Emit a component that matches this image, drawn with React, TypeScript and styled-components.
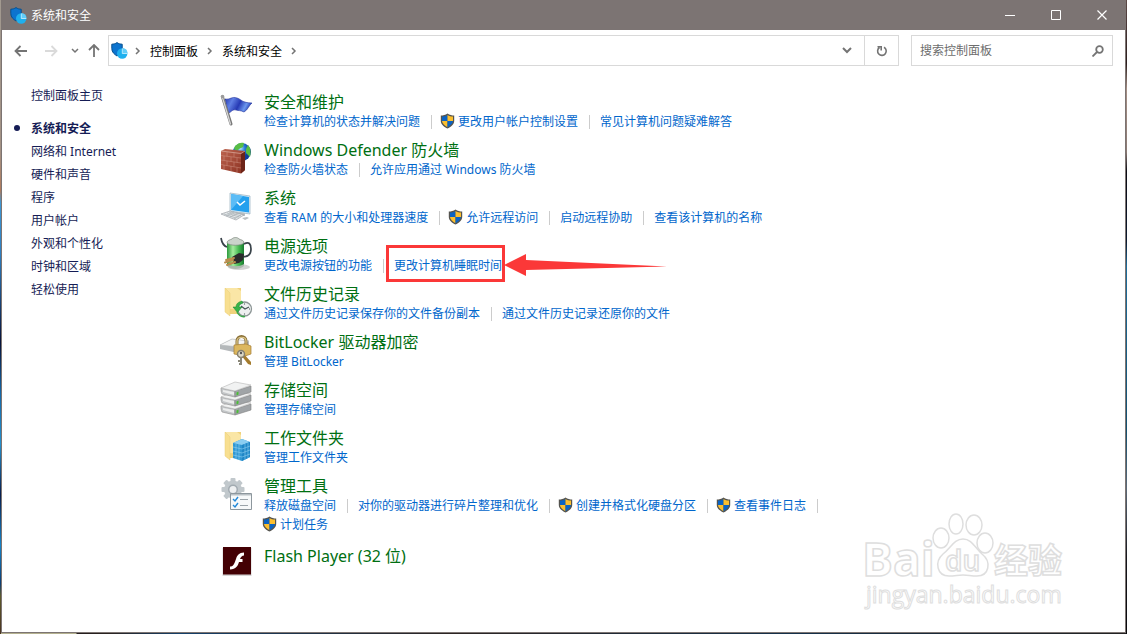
import React from 'react';
import styled, { createGlobalStyle } from 'styled-components';

const GlobalStyle = createGlobalStyle`
  *, *::before, *::after { box-sizing: border-box; }
  body {
    margin: 0;
    font-family: 'Noto Sans', 'Noto Sans CJK SC', sans-serif;
    font-size: 12px;
    color: #000;
  }
  ul { list-style: none; margin: 0; padding: 0; }
`;

const Desktop = styled.div`
  display: flex;
  min-height: 100vh;
  padding: 0 1px 1px;
  background:
    linear-gradient(#5d4a48 0, #2b1d1d 10%, #a58f85 14%, #8b7a74 24%, #0b0b14 27%, #0c1a30 38%, #1d6d9c 42%, #14506f 68%, #5c6a78 77%, #15161c 88%, #08080c) right / 1px 100% no-repeat,
    linear-gradient(#a29a90 0, #a39184 24%, #b07b5c 30%, #3f97d3 32%, #2f7fc0 40%, #071238 54%, #1568a8 62%, #2690cc 70%, #071d4c 78%, #1784c8 86%, #0b3d73 92%, #5e5a2c 94%, #4a3320) left / 1px 100% no-repeat,
    linear-gradient(90deg, #b3b08e 0, #b3b08e 76px, #221c1c 77px, #2a2320 110px, #14406a 180px, #2c2422 40%, #14304a 70%, #222) bottom / 100% 1px no-repeat;
`;

const Window = styled.div`
  position: relative;
  display: flex;
  flex-direction: column;
  flex: 1;
  min-width: 0;
  background: #fff;
  border: 1px solid #7c7472;
  border-top: 0;
`;

const TitleBar = styled.header`
  display: flex;
  align-items: center;
  height: 30px;
  padding-left: 8px;
  gap: 4px;
  background: #7c7473;
  color: #fff;
`;

const WindowTitle = styled.h1`
  flex: 1;
  margin: 0;
  font-size: 12px;
  font-weight: 400;
`;

const CaptionButtons = styled.div`
  display: flex;
`;

const CaptionButton = styled.button`
  display: grid;
  place-items: center;
  width: 46px;
  height: 28px;
  padding: 0;
  border: 0;
  background: none;
  color: #fff;
`;

const Toolbar = styled.div`
  display: flex;
  align-items: center;
  padding: 5px 12px 0 7px;
`;

const NavButton = styled.button<{ $width: number; $color?: string }>`
  display: grid;
  place-items: center;
  width: ${(p) => p.$width}px;
  height: 30px;
  padding: 0;
  border: 0;
  background: none;
  color: ${(p) => p.$color ?? '#747474'};
`;

const AddressBar = styled.div`
  display: flex;
  align-items: center;
  flex: 1;
  height: 31px;
  margin-left: 1px;
  padding-left: 2px;
  border: 1px solid #d9d9d9;
`;

const Crumbs = styled.nav`
  display: flex;
  align-items: center;
  flex: 1;
  padding-left: 7px;
  color: #747474;
`;

const Crumb = styled.a`
  padding: 0 9px;
  color: #000;
  text-decoration: none;
`;

const Refresh = styled(NavButton)`
  height: 29px;
  border-left: 1px solid #d9d9d9;
`;

const SearchBox = styled.label`
  display: flex;
  align-items: center;
  flex: 0 0 202px;
  min-width: 0;
  height: 31px;
  margin-left: 12px;
  padding: 0 8px;
  border: 1px solid #d9d9d9;
  color: #747474;
`;

const SearchInput = styled.input`
  flex: 1;
  width: 100%;
  min-width: 0;
  padding: 0;
  border: 0;
  outline: 0;
  background: none;
  font: inherit;
  color: #000;
  &::placeholder { color: #6d6d6d; opacity: 1; }
`;

const Body = styled.div`
  display: flex;
  padding-top: 18px;
`;

const Sidebar = styled.nav`
  flex: 0 0 217px;
  padding: 0 0 0 29px;
  line-height: 23px;
`;

const SideLink = styled.a<{ $current?: boolean }>`
  position: relative;
  display: block;
  width: max-content;
  color: #151c55;
  text-decoration: none;
  font-weight: ${(p) => (p.$current ? 700 : 400)};
  &::before {
    content: '';
    display: ${(p) => (p.$current ? 'block' : 'none')};
    position: absolute;
    left: -17px;
    top: 8px;
    width: 6px;
    height: 6px;
    border-radius: 50%;
    background: #151c55;
  }
`;

const SideGroup = styled.div`
  margin-top: 10px;
`;

const Categories = styled.main`
  flex: 1;
  padding-top: 8px;
`;

const Category = styled.section<{ $tall?: boolean }>`
  display: flex;
  align-items: flex-start;
  gap: 9px;
  padding-bottom: ${(p) => (p.$tall ? 12 : 9)}px;
`;

const IconBox = styled.div`
  flex: 0 0 36px;
  height: 36px;
  svg { display: block; overflow: visible; }
`;

const CategoryTitle = styled.h2`
  margin: 0;
  font-size: 16px;
  font-weight: 400;
  line-height: 20px;
`;

const TitleLink = styled.a`
  color: #006f12;
  text-decoration: none;
`;

const Tasks = styled.ul`
  display: flex;
  flex-wrap: wrap;
  max-width: 600px;
  line-height: 19px;
`;

const Task = styled.li<{ $divided: boolean }>`
  position: relative;
  display: flex;
  align-items: center;
  &::after {
    content: '';
    display: ${(p) => (p.$divided ? 'block' : 'none')};
    width: 1px;
    height: 14px;
    margin: 0 10px 0 11px;
    background: #ccc;
  }
`;

const TaskLink = styled.a`
  display: flex;
  align-items: center;
  gap: 3px;
  color: #0066cc;
  text-decoration: none;
  white-space: nowrap;
  svg { margin: 0 0 2px -2px; }
`;

const Callout = styled.div`
  position: absolute;
  left: -8px;
  top: -11px;
  width: 119px;
  height: 37px;
  border: 3px solid #fb3838;
  pointer-events: none;
  svg {
    position: absolute;
    left: 114px;
    top: 4px;
  }
`;

const Watermark = styled.div`
  position: absolute;
  right: 54px;
  bottom: 20px;
  pointer-events: none;
  svg { display: block; overflow: visible; }
`;

const UacShield = () => (
  <svg width="15" height="16" viewBox="0 0 15 16" aria-hidden="true">
    <path d="M7.500 .5C5.500 2 3 2.500 .8 2.500V8c0 3.500 3.500 6 6.700 7.500C10.700 14 14.200 11.500 14.200 8V2.500C12 2.500 9.500 2 7.500 .5Z" fill="#55544f" />
    <path d="M7.500 2C6 3 4 3.500 2 3.600V8h5.500Z" fill="#0a63c4" />
    <path d="M7.500 2C9 3 11 3.500 13 3.600V8H7.500Z" fill="#fcbf2e" />
    <path d="M2 8c.2 2.600 2.800 4.800 5.500 6.200V8Z" fill="#fcbf2e" />
    <path d="M13 8c-.2 2.600-2.800 4.800-5.500 6.200V8Z" fill="#0a63c4" />
  </svg>
);

const SecurityIcon = () => (
  <svg width="17" height="17" viewBox="0 0 17 17" aria-hidden="true">
    <path d="M6 .6C4.500 1.700 2.500 2.200 .8 2.200v4.300c0 3.600 2.500 5.800 5.200 7.500 2.700-1.700 5.200-3.900 5.200-7.500V2.200C9.500 2.200 7.500 1.700 6 .6Z" fill="#0c74cf" stroke="#08518f" />
    <circle cx="11.200" cy="11.500" r="5.200" fill="#1fb0ee" />
    <path d="M11.500 11.200V6a5.200 5.200 0 0 1 5 5.200Z" fill="#62cdf8" />
    <path d="M11.300 6.500v5h5" fill="none" stroke="#d5f3ff" strokeWidth=".8" />
  </svg>
);

const FlagIcon = () => (
  <svg width="36" height="36" viewBox="0 0 36 36">
    <defs>
      <linearGradient id="flag" x1="0" x2="1" y2=".3">
        <stop offset="0" stopColor="#2637ae" /><stop offset=".3" stopColor="#6080e4" />
        <stop offset=".6" stopColor="#2639b4" /><stop offset=".85" stopColor="#6c98ee" /><stop offset="1" stopColor="#304bbd" />
      </linearGradient>
    </defs>
    <path d="M6 7c5 1 7-3 12-1 4 1 5 5 15 5-3 2-4 7-8 9-4-2-5-1-8-2-4-1-5 3-8 3Z" fill="url(#flag)" stroke="#22329c" strokeWidth=".6" />
    <path d="M3.500 5 12 32" stroke="#777" strokeWidth="3" strokeLinecap="round" />
    <path d="M3.300 5 11.500 32" stroke="#d5d5d5" strokeWidth="1.300" strokeLinecap="round" />
    <circle cx="3.500" cy="4.500" r="1.800" fill="#9b9b9b" />
  </svg>
);

const FirewallIcon = () => (
  <svg width="36" height="36" viewBox="0 0 36 36">
    <defs>
      <radialGradient id="globe" cx=".4" cy=".3"><stop offset="0" stopColor="#b9e8ff" /><stop offset=".5" stopColor="#2980da" /><stop offset="1" stopColor="#103d99" /></radialGradient>
      <linearGradient id="brick" x2="1" y2="1"><stop offset="0" stopColor="#bd6450" /><stop offset="1" stopColor="#8a3020" /></linearGradient>
    </defs>
    <circle cx="23" cy="12" r="9" fill="url(#globe)" />
    <path d="M16 6c3-3 6-4 9-3l-1 4-4 2-2 2-3-2Zm11 3 2-4c3 3 3 8 2 12l-4-4Z" fill="#58bd45" />
    <path d="M2 11 6 9l20 2v19l-4 3.500L2 29Z" fill="url(#brick)" />
    <path d="M22 13.500 26 11v19l-4 3.500Z" fill="#6d2418" />
    <path d="M2 11l20 2.500 4-2.500" fill="none" stroke="#ddb0a2" strokeWidth=".7" />
    <path d="M2 15.500l20 2.500M2 20l20 3M2 24.500l20 3.500M8 12v4.500M15 12.500v4.500M5 16v4.500M12 17v4.500M18 18v4.500M8 21v4.500M15 22v4.500M5 25v5M12 26v5M18 27.500v5" fill="none" stroke="#d8a090" strokeWidth=".6" opacity=".7" />
  </svg>
);

const SystemIcon = () => (
  <svg width="36" height="36" viewBox="0 0 36 36">
    <path d="m11 5 20 3v18l-20-3Z" fill="#dceef8" stroke="#96afbf" strokeWidth=".7" />
    <path d="m12 6 18 3v15.500L12 22Z" fill="#24a0ee" />
    <path d="M12 22V6l12 2Z" fill="#5bbcf6" />
    <path d="m18 14 3 3 5-4" fill="none" stroke="#fff" strokeWidth="1.500" />
    <path d="m17 24 9 1v3l-9-1Z" fill="#b8bfc3" />
    <path d="m2 26 9-3 14 4-8 5Z" fill="#e3e6e8" stroke="#9da4a8" strokeWidth=".7" />
    <path d="m5 26 12 4M8 25l12 4M10 24l12 4M7 28l8-4M11 29l8-4M15 31l7-4" stroke="#a8b0b5" strokeWidth=".7" />
    <path d="m23 30 5-1 2 1-4 2Z" fill="#b9bec1" />
  </svg>
);

const PowerIcon = () => (
  <svg width="36" height="36" viewBox="0 0 36 36">
    <defs><linearGradient id="cell"><stop offset="0" stopColor="#2b9a3c" /><stop offset=".35" stopColor="#a4ec9d" /><stop offset=".7" stopColor="#43b850" /><stop offset="1" stopColor="#187a2f" /></linearGradient></defs>
    <ellipse cx="20" cy="31" rx="11" ry="3" fill="#d2d2d2" />
    <path d="M8 7v22c3 4 14 4 17 0V7Z" fill="url(#cell)" />
    <path d="M8 7c0-3 3-3 5-4 1-2 6-2 7 0 2 1 5 1 5 4-3 3-14 3-17 0Z" fill="#cbd3cb" stroke="#7c867c" strokeWidth=".7" />
    <path d="M8 28c5 3 12 3 17 0v2c-4 4-13 4-17 0Z" fill="#aeb8ae" />
    <path d="M2 2c1 6 3 8 6 9M25 8c5-3 7 0 7 5s-3 8-9 8" fill="none" stroke="#384249" strokeWidth="1.700" />
    <path d="m13 21 7-4 5 1-1 6-4 3-5 1Z" fill="#2b2c2d" />
    <path d="m15 22-8 2m9 2-8 3m6-5-8 2.500" stroke="#b98d4e" strokeWidth="2" strokeLinecap="round" />
  </svg>
);

const Folder = () => (
  <>
    <path d="M6 4h16v26H8Z" fill="#f0d27c" />
    <path d="M6 4h12l4 3v19l-11-1Z" fill="#fae6a6" />
    <path d="m6 4 5 5v23l-5-4Z" fill="#f8df90" stroke="#e9cc7a" strokeWidth=".5" />
  </>
);

const HistoryIcon = () => (
  <svg width="36" height="36" viewBox="0 0 36 36">
    <Folder />
    <circle cx="25.500" cy="25" r="7" fill="#eef0f0" stroke="#8d9696" strokeWidth="1.300" />
    <path d="M22 22l4 3 4-2M25.500 19.500v1M31 25h-1M25.500 30.500v-1" fill="none" stroke="#465156" strokeWidth="1.100" />
    <path d="M23 17c-4 1-6 3-6 6h-3l4.500 5.500L23 23h-3c0-2 1-3 4-4Z" fill="#38b44a" stroke="#16802b" strokeWidth=".5" />
    <path d="M18 28c2 4 5 5 8 4.500" fill="none" stroke="#3aa74a" strokeWidth="1.500" />
  </svg>
);

const BitLockerIcon = () => (
  <svg width="36" height="36" viewBox="0 0 36 36">
    <path d="m1 13 12-6 17 2v8l-11 4-18-4Z" fill="#b4b8ba" />
    <path d="m1 13 12-6 17 2-10 6Z" fill="#f3f4f4" stroke="#b4b7b9" strokeWidth=".6" />
    <path d="M18 14V9c0-6 9-6 9 0v5" fill="none" stroke="#8b7138" strokeWidth="3" />
    <path d="M18 14V9c0-5 9-5 9 0v5" fill="none" stroke="#e0cb8e" strokeWidth="1.200" />
    <path d="m15 13 12-1 5 2v8l-6 2-11-2Z" fill="#dcb75e" stroke="#a57d34" strokeWidth=".7" />
    <path d="m24 21 8 9v3l-3-1-7-9Z" fill="#a47b2d" />
    <circle cx="22" cy="22" r="3.500" fill="#ded9c6" stroke="#858070" strokeWidth="1.500" />
    <path d="M22 25v8m0-4h-3m3 3h-2" stroke="#8a8778" strokeWidth="2" />
    <circle cx="22" cy="21" r="1.200" fill="#555" />
  </svg>
);

const StorageIcon = () => (
  <svg width="36" height="36" viewBox="0 0 36 36">
    {[18, 9, 0].map((y) => (
      <g key={y} transform={`translate(1 ${y})`}>
        <path d="m1 8 14 3v6L2 14c-1-2-1-4-1-6Z" fill="#c3c6c8" stroke="#8c8c8c" strokeWidth=".6" />
        <path d="m15 11 16-5v6l-16 5Z" fill="#a0a4a7" stroke="#808080" strokeWidth=".6" />
        <path d="M1 8 15 2l16 3-16 6Z" fill="#f1f2f2" stroke="#b5b5b5" strokeWidth=".6" />
        <path d="m3 10 11 2v3L3 12Z" fill="#ebecec" />
        <path d="m16.500 12.500 2-1v3l-2 1Z" fill="#48bf34" />
      </g>
    ))}
  </svg>
);

const WorkFolderIcon = () => (
  <svg width="36" height="36" viewBox="0 0 36 36">
    <Folder />
    <path d="m14 15 9-4 8 3v15l-8 4-9-3Z" fill="#3097d3" />
    <path d="m14 15 9-4 8 3-8 3Z" fill="#8bcdf1" />
    <path d="M23 17v16l8-4V14Z" fill="#1f86c6" />
    <path d="M14 19l9 2 8-3M14 23l9 2 8-3M14 27l9 2 8-3M17 16v15M20 16v16M26 16v16M29 15v15" fill="none" stroke="#8fd0f2" strokeWidth=".6" />
  </svg>
);

const ToolsIcon = () => (
  <svg width="36" height="36" viewBox="0 0 36 36">
    <g fill="#c1c8cc">
      {[0, 45, 90, 135].map((a) => (
        <rect key={a} x="11.500" y="2" width="5" height="23" rx="1" transform={`rotate(${a} 14 13.500)`} />
      ))}
      <circle cx="14" cy="13.500" r="9" />
    </g>
    <circle cx="14" cy="13.500" r="5" fill="#a2abb1" />
    <circle cx="14" cy="13.500" r="3.500" fill="#eef0f1" />
    <path d="M11.500 17.500h21v16h-21Z" fill="#f7f9fa" stroke="#8d979d" />
    <path d="M12 18h20v1.500H12Z" fill="#b9c0c5" />
    <path d="m14 23 2 2 3-4m-5 8 2 2 3-4" fill="none" stroke="#2489d8" strokeWidth="1.400" />
    <path d="M21 23.500h8m-8 6h8" stroke="#9ba4aa" strokeWidth="1" />
  </svg>
);

const FlashIcon = () => (
  <svg width="36" height="36" viewBox="0 0 36 36">
    <path d="M3.500 2h29v28h-29Z" fill="#bbb" opacity=".6" />
    <path d="M4 1h28v27.500H4Z" fill="#430004" />
    <path d="M25 6.500c-5 0-7 3-8 6.500-2 6-3 7.500-6 7.500v3c6 0 8-4 9-7.500h3.500v-3H21c1-2 2-3.500 4-3.500Z" fill="#fff" />
  </svg>
);

type TaskData = { label: string; shield?: boolean; callout?: boolean };
type CategoryData = { title: string; Icon: React.FC; tasks: TaskData[]; tall?: boolean };

const categories: CategoryData[] = [
  { title: '安全和维护', Icon: FlagIcon, tasks: [{ label: '检查计算机的状态并解决问题' }, { label: '更改用户帐户控制设置', shield: true }, { label: '常见计算机问题疑难解答' }] },
  { title: 'Windows Defender 防火墙', Icon: FirewallIcon, tasks: [{ label: '检查防火墙状态' }, { label: '允许应用通过 Windows 防火墙' }] },
  { title: '系统', Icon: SystemIcon, tasks: [{ label: '查看 RAM 的大小和处理器速度' }, { label: '允许远程访问', shield: true }, { label: '启动远程协助' }, { label: '查看该计算机的名称' }] },
  { title: '电源选项', Icon: PowerIcon, tasks: [{ label: '更改电源按钮的功能' }, { label: '更改计算机睡眠时间', callout: true }] },
  { title: '文件历史记录', Icon: HistoryIcon, tasks: [{ label: '通过文件历史记录保存你的文件备份副本' }, { label: '通过文件历史记录还原你的文件' }] },
  { title: 'BitLocker 驱动器加密', Icon: BitLockerIcon, tasks: [{ label: '管理 BitLocker' }] },
  { title: '存储空间', Icon: StorageIcon, tasks: [{ label: '管理存储空间' }] },
  { title: '工作文件夹', Icon: WorkFolderIcon, tasks: [{ label: '管理工作文件夹' }] },
  { title: '管理工具', Icon: ToolsIcon, tall: true, tasks: [{ label: '释放磁盘空间' }, { label: '对你的驱动器进行碎片整理和优化' }, { label: '创建并格式化硬盘分区', shield: true }, { label: '查看事件日志', shield: true }, { label: '计划任务', shield: true }] },
  { title: 'Flash Player (32 位)', Icon: FlashIcon, tasks: [] },
];

const sideItems = ['系统和安全', '网络和 Internet', '硬件和声音', '程序', '用户帐户', '外观和个性化', '时钟和区域', '轻松使用'];

const Chevron = () => (
  <svg width="6" height="8" viewBox="0 0 6 8" fill="none" stroke="currentColor" strokeWidth="1.500" aria-hidden="true">
    <path d="m1 1 3 3-3 3" />
  </svg>
);

const Arrow = () => (
  <svg width="164" height="28" viewBox="0 0 164 28" aria-hidden="true">
    <path d="m1 13 22-11v6l141 6.500-141 3.500v6Z" fill="#fb3838" />
  </svg>
);

const BaiduMark = () => (
  <svg width="206" height="102" viewBox="0 0 206 102" role="img" aria-label="Baidu 经验">
    <g fill="#fff" stroke="#dedede" strokeWidth="1.500">
      <text x="-3" y="66" fontFamily="Open Sans, sans-serif" fontWeight="700" fontSize="46">Bai</text>
      <path d="M98 29c9 0 12 9 19 15 10 8 7 22-5 22-6 0-9-1-14-1s-8 1-14 1c-12 0-15-14-6-22 8-6 11-15 20-15Z" />
      <ellipse cx="76" cy="28" rx="8" ry="10" />
      <ellipse cx="91" cy="14" rx="7" ry="10" />
      <ellipse cx="109" cy="15" rx="8" ry="10" />
      <ellipse cx="120" cy="33" rx="8" ry="10" />
      <text x="80" y="61" fontFamily="Open Sans, sans-serif" fontWeight="600" fontSize="28">du</text>
      <text x="129" y="63" fontFamily="Noto Sans CJK SC, sans-serif" fontWeight="700" fontSize="34">经验</text>
      <text x="1" y="93" fontFamily="Open Sans, sans-serif" fontWeight="400" fontSize="23" strokeWidth="1">jingyan.baidu.com</text>
    </g>
  </svg>
);

export default function App() {
  return (
    <>
      <GlobalStyle />
      <Desktop>
        <Window>
          <TitleBar>
            <SecurityIcon />
            <WindowTitle>系统和安全</WindowTitle>
            <CaptionButtons>
              <CaptionButton aria-label="最小化">
                <svg width="10" height="10" stroke="currentColor"><path d="M0 5.500h10" /></svg>
              </CaptionButton>
              <CaptionButton aria-label="最大化">
                <svg width="10" height="10" stroke="currentColor" fill="none"><path d="M.5 .5h9v9h-9Z" /></svg>
              </CaptionButton>
              <CaptionButton aria-label="关闭">
                <svg width="10" height="10" stroke="currentColor" strokeWidth="1.200"><path d="m.5 .5 9 9m0-9-9 9" /></svg>
              </CaptionButton>
            </CaptionButtons>
          </TitleBar>

          <Toolbar>
            <NavButton $width={24} aria-label="后退">
              <svg width="14" height="12" fill="none" stroke="currentColor" strokeWidth="1.800"><path d="M6.500 1 1.500 6l5 5M1.500 6H13" /></svg>
            </NavButton>
            <NavButton $width={36} $color="#dadada" aria-label="前进">
              <svg width="14" height="12" fill="none" stroke="currentColor" strokeWidth="1.800"><path d="m7.500 1 5 5-5 5M12.500 6H1" /></svg>
            </NavButton>
            <NavButton $width={12} aria-label="最近浏览的位置">
              <svg width="8" height="6" fill="none" stroke="currentColor" strokeWidth="1.500"><path d="m1 1 3 3 3-3" /></svg>
            </NavButton>
            <NavButton $width={26} aria-label="向上">
              <svg width="12" height="13" fill="none" stroke="currentColor" strokeWidth="1.800"><path d="m1 6 5-5 5 5M6 1v12" /></svg>
            </NavButton>
            <AddressBar>
              <SecurityIcon />
              <Crumbs aria-label="地址">
                <Chevron />
                <Crumb href="#panel">控制面板</Crumb>
                <Chevron />
                <Crumb href="#security">系统和安全</Crumb>
                <Chevron />
              </Crumbs>
              <NavButton $width={34} aria-label="以前的位置">
                <svg width="10" height="7" fill="none" stroke="currentColor" strokeWidth="2"><path d="m1 1 4 4 4-4" /></svg>
              </NavButton>
              <Refresh $width={34} aria-label="刷新">
                <svg width="12" height="12" fill="none" stroke="currentColor" strokeWidth="1.600"><path d="M8 2.300A4.300 4.300 0 1 1 3.500 2.500M1.500 1.800h3.700v3.700" /></svg>
              </Refresh>
            </AddressBar>
            <SearchBox>
              <SearchInput type="text" placeholder="搜索控制面板" aria-label="搜索控制面板" />
              <svg width="12" height="12" fill="none" stroke="currentColor" strokeWidth="1.800" aria-hidden="true"><circle cx="7.500" cy="4.500" r="3.300" /><path d="m5 7-4.500 4.500" /></svg>
            </SearchBox>
          </Toolbar>

          <Body>
            <Sidebar aria-label="类别">
              <SideLink href="#home">控制面板主页</SideLink>
              <SideGroup>
                {sideItems.map((item, i) => (
                  <SideLink key={item} href={`#side-${i}`} $current={i === 0}>{item}</SideLink>
                ))}
              </SideGroup>
            </Sidebar>
            <Categories>
              {categories.map(({ title, Icon, tasks, tall }) => (
                <Category key={title} $tall={tall}>
                  <IconBox aria-hidden="true"><Icon /></IconBox>
                  <div>
                    <CategoryTitle><TitleLink href="#category">{title}</TitleLink></CategoryTitle>
                    <Tasks>
                      {tasks.map((task, i) => (
                        <Task key={task.label} $divided={i < tasks.length - 1}>
                          <TaskLink href="#task">
                            {task.shield && <UacShield />}
                            {task.label}
                          </TaskLink>
                          {task.callout && <Callout><Arrow /></Callout>}
                        </Task>
                      ))}
                    </Tasks>
                  </div>
                </Category>
              ))}
            </Categories>
          </Body>

          <Watermark><BaiduMark /></Watermark>
        </Window>
      </Desktop>
    </>
  );
}
